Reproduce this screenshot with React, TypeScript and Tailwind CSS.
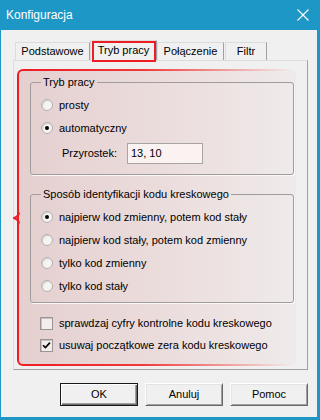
import React from "react";

function Radio({ checked, label }: { checked?: boolean; label: string }) {
  return (
    <div className="flex items-center h-[16px] gap-[6px]">
      <span className="w-[12px] h-[12px] rounded-full border border-[#b4b0b0] bg-[#f6f3f3] shadow-[inset_1px_1px_1px_rgba(0,0,0,0.15)] flex items-center justify-center shrink-0">
        {checked && <span className="w-[4px] h-[4px] rounded-full bg-black" />}
      </span>
      <span className="leading-[13px]">{label}</span>
    </div>
  );
}

function Check({ checked, label }: { checked?: boolean; label: string }) {
  return (
    <div className="flex items-center h-[16px] gap-[6px]">
      <span className="w-[13px] h-[13px] border border-[#9a9494] bg-[#f3eded] shadow-[inset_1px_1px_0_#c9c2c2] flex items-center justify-center shrink-0">
        {checked && (
          <svg width="9" height="9" viewBox="0 0 9 9">
            <path d="M1 4.2 L3.4 6.6 L8 1.6" stroke="#000" strokeWidth="1.6" fill="none" />
          </svg>
        )}
      </span>
      <span className="leading-[13px]">{label}</span>
    </div>
  );
}

function Tab({ label, w }: { label: string; w: string }) {
  return (
    <div
      className={`${w} h-[18px] border-t border-l border-r border-t-[#dcdcdc] border-l-[#dcdcdc] border-r-[#a0a0a0] bg-[#f0f0f0] flex items-center justify-center leading-[13px]`}
    >
      {label}
    </div>
  );
}

function Btn({ label, def }: { label: string; def?: boolean }) {
  return (
    <div
      className={`w-[78px] h-[23px] flex items-center justify-center bg-[#f0f0f0] ${
        def
          ? "border border-[#1a1a1a] shadow-[inset_1px_1px_0_#ffffff,inset_-1px_-1px_0_#696969,inset_-2px_-2px_0_#a0a0a0]"
          : "border border-t-[#ffffff] border-l-[#ffffff] border-r-[#696969] border-b-[#696969] shadow-[inset_1px_1px_0_#e3e3e3,inset_-1px_-1px_0_#a0a0a0]"
      }`}
    >
      {label}
    </div>
  );
}

export default function App() {
  return (
    <div className="w-[320px] h-[420px] bg-[#1d98c6] flex flex-col pl-[1px] pr-[3px] pb-[3px] font-['Liberation_Sans',Arial,sans-serif] text-[11px] text-black">
      <div className="h-[30px] flex items-center justify-between pl-[5px] pr-[8px] text-white text-[12px] shrink-0">
        <span>Konfiguracja</span>
        <svg width="12" height="12" viewBox="0 0 12 12">
          <path d="M0.5 0.5 L11.5 11.5 M11.5 0.5 L0.5 11.5" stroke="#fff" strokeWidth="1.1" />
        </svg>
      </div>
      <div className="flex-1 bg-[#f0f0f0] flex flex-col pt-[10px] pl-[12px] pr-[9px]">
        <div className="h-[20px] flex items-end pl-[2px]">
          <Tab label="Podstawowe" w="w-[75px]" />
          <div className="relative w-[67px] h-[20px] border-t border-l border-r border-t-[#dcdcdc] border-l-[#dcdcdc] border-r-[#a0a0a0] bg-[#f0f0f0] flex items-center justify-center leading-[13px] z-10">
            Tryb pracy
            <div className="absolute left-[1px] right-[0px] top-[0px] bottom-[-2px] border-2 border-[#ee1c24]" />
          </div>
          <Tab label="Połączenie" w="w-[67px]" />
          <div className="w-[1px]" />
          <Tab label="Filtr" w="w-[42px]" />
        </div>
        <div className="h-[310px] border border-t-[#dcdcdc] border-l-[#dcdcdc] border-r-[#a0a0a0] border-b-[#a0a0a0] flex flex-col pt-[8px] pl-[3px] pr-[11px] pb-[3px]">
          <div className="relative flex-1 rounded-[6px] pl-[2px] py-[2px] bg-[linear-gradient(to_right,#ee1c24_0%,#f03a3a_45%,rgba(240,60,60,0)_100%)]">
            <svg
              className="absolute left-[-4px] top-[143px]"
              width="7"
              height="12"
              viewBox="0 0 7 12"
            >
              <path d="M6 0.5 Q6 4 1 6 Q6 8 6 11.5" stroke="#ee1c24" strokeWidth="2" fill="none" />
            </svg>
            <div className="h-full rounded-[4px] bg-[linear-gradient(to_right,#e5cfcf_0%,#ebdcdc_50%,#efeaea_100%)] flex flex-col">
              <fieldset className="ml-[11px] mr-[2px] mt-[5px] border border-[#a09c9c] rounded-[3px] shadow-[1px_1px_0_#fbf7f7] pl-[10px] pt-[8px] pb-[10px]">
                <legend className="px-[2px] leading-[13px]">Tryb pracy</legend>
                <div className="flex flex-col gap-[7px]">
                  <Radio label="prosty" />
                  <Radio checked label="automatyczny" />
                  <div className="flex items-center h-[21px] pl-[21px]">
                    <span className="w-[65px]">Przyrostek:</span>
                    <div className="w-[76px] h-[21px] border border-[#a8a4a4] bg-[#fbf2f2] flex items-center pl-[3px]">
                      13, 10
                    </div>
                  </div>
                </div>
              </fieldset>
              <fieldset className="ml-[11px] mr-[2px] mt-[13px] border border-[#a09c9c] rounded-[3px] shadow-[1px_1px_0_#fbf7f7] pl-[10px] pt-[8px] pb-[8px]">
                <legend className="px-[2px] leading-[13px]">
                  Sposób identyfikacji kodu kreskowego
                </legend>
                <div className="flex flex-col gap-[7px]">
                  <Radio checked label="najpierw kod zmienny, potem kod stały" />
                  <Radio label="najpierw kod stały, potem kod zmienny" />
                  <Radio label="tylko kod zmienny" />
                  <Radio label="tylko kod stały" />
                </div>
              </fieldset>
              <div className="ml-[21px] mt-[12px] flex flex-col gap-[6px]">
                <Check label="sprawdzaj cyfry kontrolne kodu kreskowego" />
                <Check checked label="usuwaj początkowe zera kodu kreskowego" />
              </div>
            </div>
          </div>
        </div>
        <div className="flex justify-end gap-[7px] mt-[13px]">
          <Btn label="OK" def />
          <Btn label="Anuluj" />
          <Btn label="Pomoc" />
        </div>
      </div>
    </div>
  );
}
